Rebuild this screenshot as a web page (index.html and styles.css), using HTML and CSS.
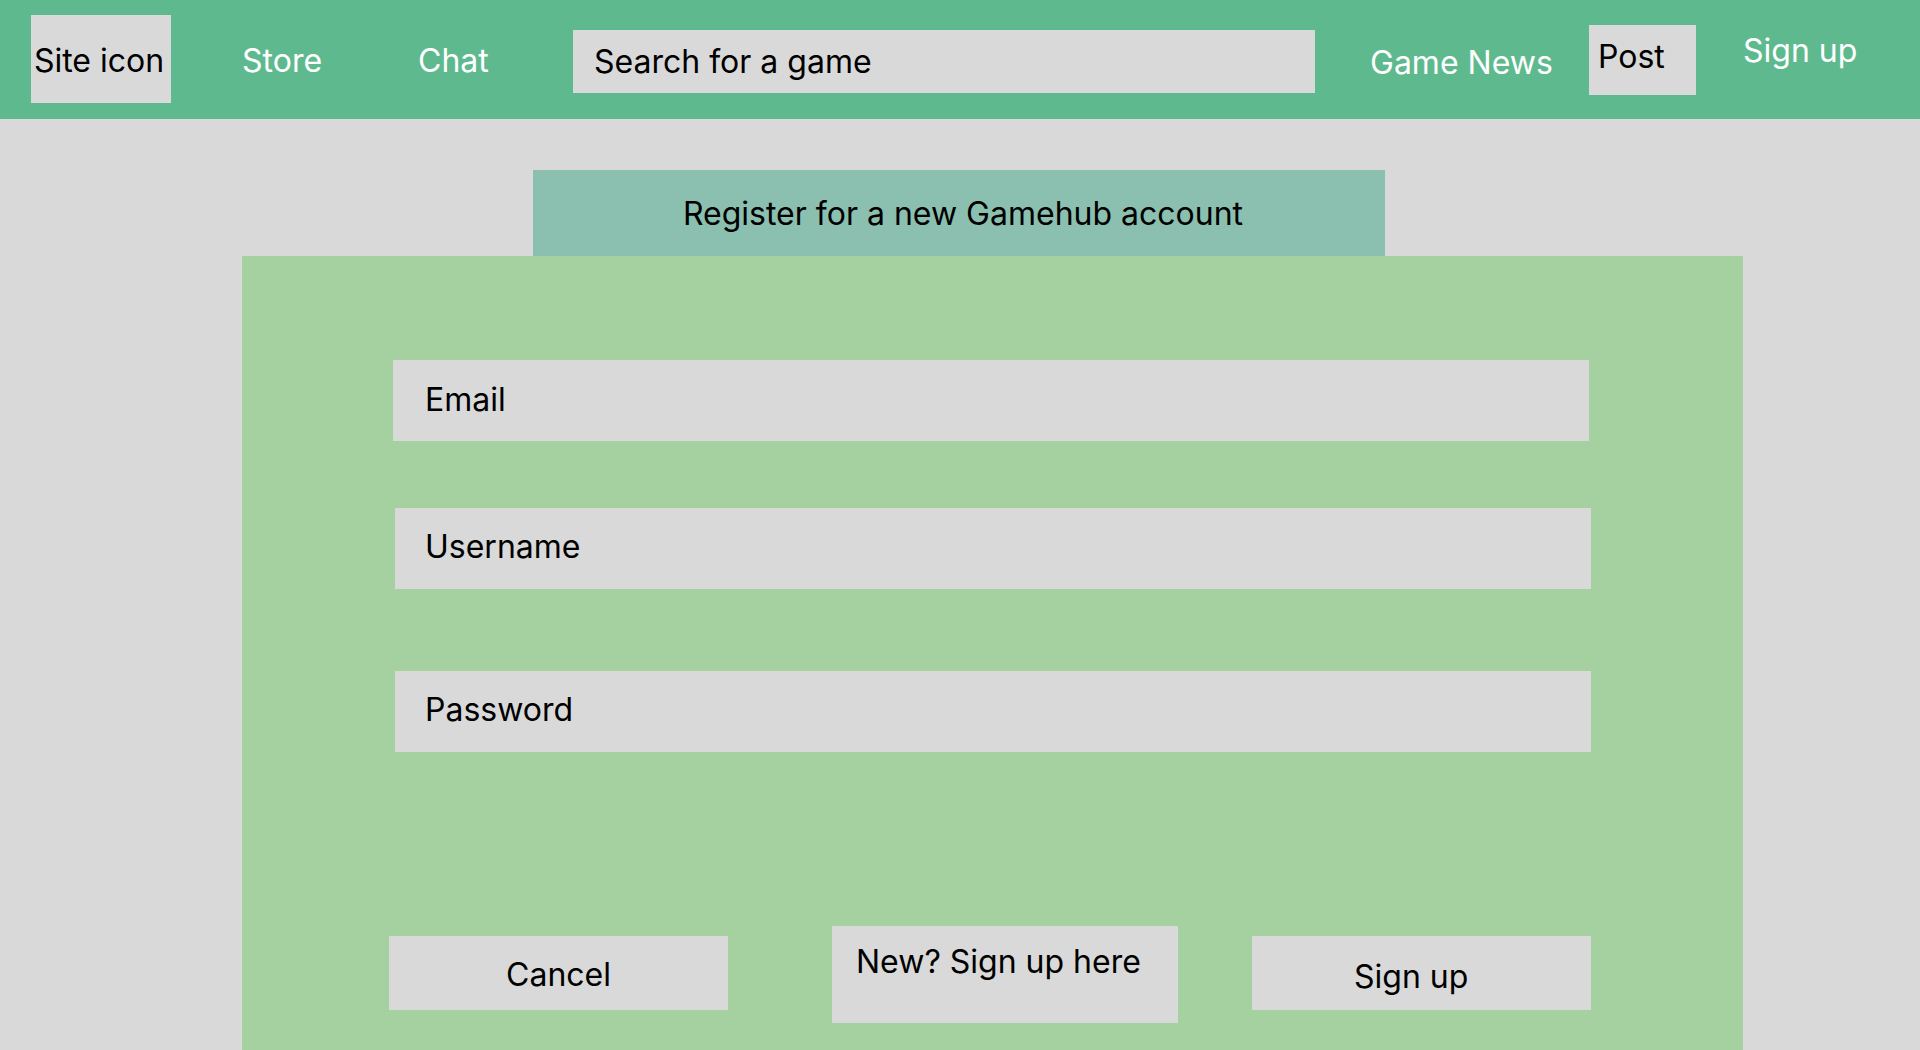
FILE: index.html
```html
<!DOCTYPE html>
<html lang="en">
<head>
<meta charset="utf-8">
<title>Gamehub - Register</title>
<link rel="stylesheet" href="styles.css">
</head>
<body>
<header class="topbar">
  <div class="site-icon">Site icon</div>
  <a class="nav-link nav-store">Store</a>
  <a class="nav-link nav-chat">Chat</a>
  <div class="search">Search for a game</div>
  <a class="nav-link nav-news">Game News</a>
  <div class="post-btn">Post</div>
  <a class="nav-link nav-signup">Sign up</a>
</header>
<main class="page">
  <div class="tab-title">Register for a new Gamehub account</div>
  <section class="panel">
    <div class="field field-email">Email</div>
    <div class="field field-username">Username</div>
    <div class="field field-password">Password</div>
    <div class="actions">
      <div class="btn btn-cancel">Cancel</div>
      <div class="btn btn-new">New? Sign up here</div>
      <div class="btn btn-signup">Sign up</div>
    </div>
  </section>
</main>
</body>
</html>
```
FILE: styles.css
```css
* { box-sizing: border-box; }
html, body { margin: 0; padding: 0; }
body {
  background: #d9d9d9;
  font-family: Inter, "Noto Sans", sans-serif;
  font-size: 32px;
  line-height: 39px;
  color: #000;
  height: 1050px;
  overflow: hidden;
}

/* Header */
.topbar {
  display: flex;
  align-items: flex-start;
  height: 119px;
  background: #5eba8e;
}
.site-icon {
  margin: 15px 0 0 31px;
  width: 140px;
  height: 88px;
  background: #d9d9d9;
  display: flex;
  align-items: center;
  justify-content: center;
  padding: 3px 4px 0 0;
}
.nav-link {
  color: #fff;
  white-space: nowrap;
}
.nav-store { margin: 41px 0 0 71px; width: 176px; }
.nav-chat { margin-top: 41px; width: 155px; }
.search {
  margin-top: 30px;
  width: 742px;
  height: 63px;
  background: #d9d9d9;
  display: flex;
  align-items: center;
  padding: 0 0 0 21px;
}
.nav-news { margin: 43px 0 0 55px; width: 219px; }
.post-btn {
  margin-top: 25px;
  width: 107px;
  height: 70px;
  background: #d9d9d9;
  padding: 12px 0 0 9px;
}
.nav-signup { margin: 31px 0 0 47px; }

/* Main */
.page {
  padding-top: 51px;
}
.tab-title {
  margin-left: 533px;
  width: 852px;
  height: 86px;
  background: #8bbfaf;
  display: flex;
  align-items: center;
  justify-content: center;
  padding-left: 8px;
}
.panel {
  margin-left: 242px;
  width: 1501px;
  height: 800px;
  background: #a5d1a1;
  padding: 104px 0 0 147px;
}
.field {
  width: 1196px;
  height: 81px;
  background: #d9d9d9;
  display: flex;
  align-items: flex-start;
  padding-left: 30px;
}
.field-email { margin-left: 4px; padding-left: 32px; padding-top: 20px; }
.field-username { margin: 67px 0 0 6px; padding-top: 19px; }
.field-password { margin: 82px 0 0 6px; padding-top: 19px; }

.actions {
  display: flex;
  align-items: flex-start;
  margin-top: 174px;
}
.btn {
  background: #d9d9d9;
  white-space: nowrap;
}
.btn-cancel {
  margin-top: 10px;
  width: 339px;
  height: 74px;
  display: flex;
  justify-content: center;
  padding-top: 19px;
}
.btn-new {
  margin-left: 104px;
  width: 346px;
  height: 97px;
  padding: 16px 0 0 24px;
}
.btn-signup {
  margin: 10px 0 0 74px;
  width: 339px;
  height: 74px;
  padding: 21px 0 0 102px;
}
```
